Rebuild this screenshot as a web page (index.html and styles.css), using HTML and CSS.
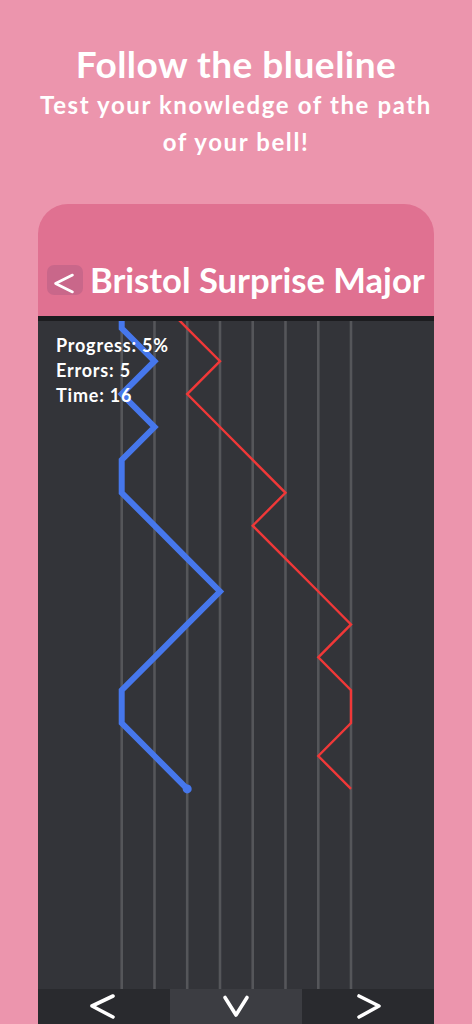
FILE: index.html
```html
<!DOCTYPE html>
<html lang="en">
<head>
  <meta charset="UTF-8">
  <meta name="viewport" content="width=device-width, initial-scale=1.0">
  <title>Follow the blueline</title>
  <link rel="stylesheet" href="styles.css">
</head>
<body>
  <header class="intro">
    <h1>Follow the blueline</h1>
    <p>Test your knowledge of the path<br>of your bell!</p>
  </header>

  <div class="phone">
    <div class="phone-header">
      <button class="back" aria-label="Back">
        <svg width="36" height="30" viewBox="0 0 36 30"><polyline points="25.5,10 8.5,18.5 25.5,27" /></svg>
      </button>
      <h2 class="method">Bristol Surprise Major</h2>
    </div>

    <div class="board">
      <svg class="lines" width="396" height="668" viewBox="0 0 396 668">
        <g class="places">
          <line x1="83.7" y1="0" x2="83.7" y2="668" />
          <line x1="116.5" y1="0" x2="116.5" y2="668" />
          <line x1="149.2" y1="0" x2="149.2" y2="668" />
          <line x1="182" y1="0" x2="182" y2="668" />
          <line x1="214.7" y1="0" x2="214.7" y2="668" />
          <line x1="247.5" y1="0" x2="247.5" y2="668" />
          <line x1="280.3" y1="0" x2="280.3" y2="668" />
          <line x1="313" y1="0" x2="313" y2="668" />
        </g>
        <!-- the method's path -->
        <polyline class="redline" points="116.5,-25.6 149.2,7.3 182,40.2 149.2,73.1 182,106 214.7,138.9 247.5,171.8 214.7,204.7 247.5,237.6 280.3,270.5 313,303.4 280.3,336.3 313,369.2 313,402.1 280.3,435 313,467.9" />
        <!-- what the player rang -->
        <polyline class="blueline" points="83.7,-25.6 83.7,7.3 116.5,40.2 83.7,73.1 116.5,106 83.7,138.9 83.7,171.8 116.5,204.7 149.2,237.6 182,270.5 149.2,303.4 116.5,336.3 83.7,369.2 83.7,402.1 116.5,435 149.2,467.9" />
        <circle class="bell" cx="149.2" cy="467.9" r="4.5" />
      </svg>

      <div class="stats">
        <div>Progress: 5%</div>
        <div>Errors: 5</div>
        <div>Time: 16</div>
      </div>
    </div>

    <nav class="controls">
      <button aria-label="Left">
        <svg width="40" height="30" viewBox="0 0 40 30"><polyline points="29,4 8,14 29,25" /></svg>
      </button>
      <button class="middle" aria-label="Stay">
        <svg width="40" height="30" viewBox="0 0 40 30"><polyline points="9,5.5 20,23 31,5.5" /></svg>
      </button>
      <button aria-label="Right">
        <svg width="40" height="30" viewBox="0 0 40 30"><polyline points="11,4 31,14 11,25" /></svg>
      </button>
    </nav>
  </div>
</body>
</html>
```

FILE: styles.css
```css
/* General styling */
body {
  margin: 0;
  background-color: #ec95ad;
  font-family: Lato, "Open Sans", sans-serif;
  color: #fff;
  overflow: hidden;
}

/* Intro text */
.intro {
  text-align: center;
  padding-top: 42px;
}

.intro h1 {
  margin: 0;
  font-size: 37px;
  line-height: 44px;
  letter-spacing: 0.5px;
  font-weight: 700;
}

.intro p {
  margin: 0;
  font-size: 24px;
  line-height: 37px;
  letter-spacing: 1.6px;
  font-weight: 700;
}

/* Phone frame */
.phone {
  width: 396px;
  margin: 44px 0 0 38px;
  border-radius: 30px 30px 0 0;
  overflow: hidden;
}

.phone-header {
  display: flex;
  align-items: center;
  gap: 7px;
  height: 36px;
  padding: 58px 0 18px 9px;
  background-color: #e07191;
  border-bottom: 5px solid #1c1c1f;
}

.back {
  flex-shrink: 0;
  width: 36px;
  height: 30px;
  padding: 0;
  border: none;
  border-radius: 7px;
  background-color: #c9678a;
}

.back svg {
  display: block;
}

.back polyline {
  fill: none;
  stroke: #fff;
  stroke-width: 2.6;
  stroke-linecap: round;
  stroke-linejoin: round;
}

.method {
  margin: 0;
  font-size: 34.6px;
  line-height: 36px;
  font-weight: 700;
  white-space: nowrap;
}

/* Board with the place lines */
.board {
  position: relative;
  height: 668px;
  background-color: #333439;
}

.lines {
  display: block;
}

.places line {
  stroke: #55565a;
  stroke-width: 2.6;
}

.redline {
  fill: none;
  stroke: #f03838;
  stroke-width: 2.4;
}

.blueline {
  fill: none;
  stroke: #4677ec;
  stroke-width: 6;
  stroke-linejoin: miter;
}

.bell {
  fill: #4677ec;
}

.stats {
  position: absolute;
  top: 12px;
  left: 18px;
  font-size: 18px;
  line-height: 25px;
  letter-spacing: 0.8px;
  font-weight: 700;
}

/* Bottom controls */
.controls {
  display: grid;
  grid-template-columns: repeat(3, 1fr);
  height: 35px;
}

.controls button {
  display: flex;
  align-items: center;
  justify-content: center;
  padding: 0;
  border: none;
  background-color: #292a2e;
}

.controls button.middle {
  background-color: #3c3d42;
}

.controls polyline {
  fill: none;
  stroke: #fff;
  stroke-width: 3.6;
  stroke-linecap: round;
  stroke-linejoin: round;
}
```
